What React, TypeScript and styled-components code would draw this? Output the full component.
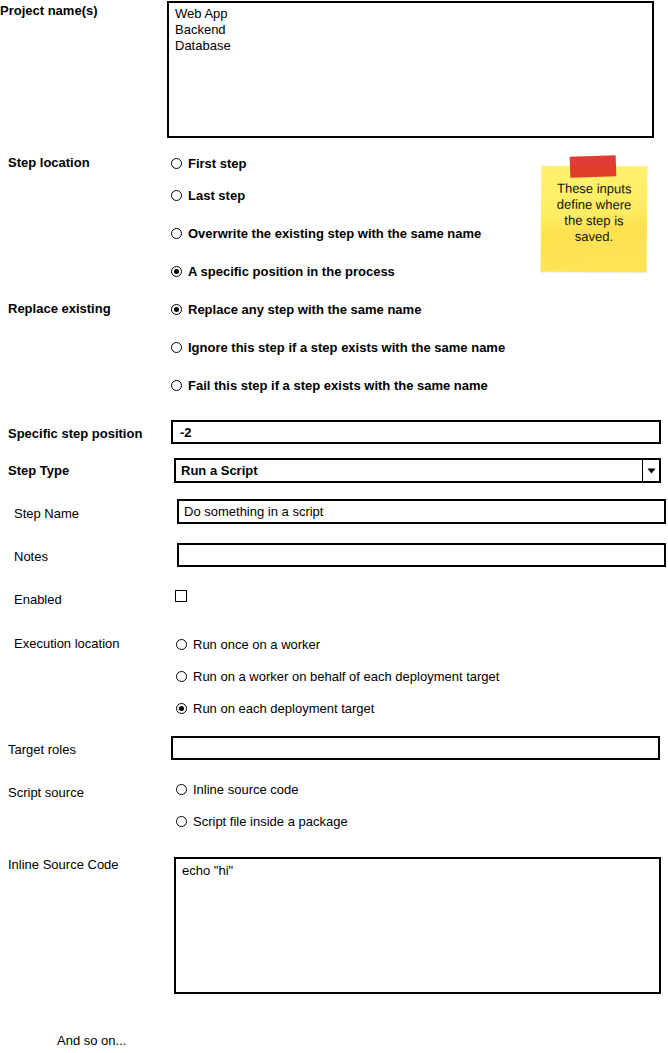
import React from "react";
import styled, { createGlobalStyle } from "styled-components";

const Global = createGlobalStyle`
  html, body { margin: 0; padding: 0; background: #fff; }
  body { font-family: "Liberation Sans", Arial, sans-serif; color: #000; font-size: 13px; }
`;

const Page = styled.div`
  position: relative;
  width: 668px;
  height: 1053px;
  overflow: hidden;
  background: #fff;
`;

const Row = styled.div<{ $mt: number }>`
  display: flex;
  align-items: flex-start;
  margin-top: ${(p) => p.$mt}px;
`;

const Label = styled.div<{ $indent: number; $pt: number; $bold?: boolean; $w: number }>`
  flex: 0 0 ${(p) => p.$w - p.$indent}px;
  padding-left: ${(p) => p.$indent}px;
  padding-top: ${(p) => p.$pt}px;
  font-size: 13px;
  line-height: 16px;
  font-weight: ${(p) => (p.$bold ? 700 : 400)};
  white-space: nowrap;
`;

const Field = styled.div<{ $right: number }>`
  flex: 1;
  margin-right: ${(p) => p.$right}px;
`;

const TextBox = styled.div<{ $h: number; $bold?: boolean; $pl?: number }>`
  box-sizing: border-box;
  height: ${(p) => p.$h}px;
  border: 2px solid #000;
  background: #fff;
  padding: 0 0 0 ${(p) => p.$pl ?? 7}px;
  display: flex;
  align-items: center;
  font-size: 13px;
  font-weight: ${(p) => (p.$bold ? 700 : 400)};
  white-space: nowrap;
`;

const TextArea = styled.div<{ $h: number; $pt: number; $pl: number }>`
  box-sizing: border-box;
  height: ${(p) => p.$h}px;
  border: 2px solid #000;
  background: #fff;
  padding: ${(p) => p.$pt}px 0 0 ${(p) => p.$pl}px;
  font-size: 13px;
  line-height: 16px;
`;

const SelectBox = styled.div`
  box-sizing: border-box;
  height: 25px;
  border: 2px solid #000;
  display: flex;
  align-items: stretch;
  font-size: 13px;
  font-weight: 700;
`;

const SelectText = styled.div`
  flex: 1;
  display: flex;
  align-items: center;
  padding-left: 5px;
`;

const SelectButton = styled.div`
  flex: 0 0 16px;
  border-left: 1.5px solid #000;
  display: flex;
  align-items: center;
  justify-content: center;
`;

const RadioList = styled.div`
  display: flex;
  flex-direction: column;
`;

const RadioItem = styled.div<{ $mt: number; $bold?: boolean }>`
  display: flex;
  align-items: center;
  gap: 6px;
  margin-top: ${(p) => p.$mt}px;
  height: 16px;
  font-size: 13px;
  font-weight: ${(p) => (p.$bold ? 700 : 400)};
  white-space: nowrap;
`;

const RadioCircle = styled.span<{ $on?: boolean }>`
  box-sizing: border-box;
  width: 11px;
  height: 11px;
  border-radius: 50%;
  border: 1.5px solid #000;
  display: inline-flex;
  align-items: center;
  justify-content: center;
  flex: 0 0 auto;
  &::after {
    content: "";
    width: 5px;
    height: 5px;
    border-radius: 50%;
    background: ${(p) => (p.$on ? "#000" : "transparent")};
  }
`;

const CheckBox = styled.div`
  box-sizing: border-box;
  width: 12px;
  height: 12px;
  border: 1.5px solid #000;
  margin-left: 4px;
`;

const Sticky = styled.div`
  position: absolute;
  left: 541px;
  top: 166px;
  width: 106px;
  height: 106px;
  box-sizing: border-box;
  padding-top: 15px;
  background: linear-gradient(175deg, #fff170 0%, #ffec63 45%, #ffe14f 60%, #ffe459 100%);
  box-shadow: 0 1px 1px rgba(0, 0, 0, 0.08);
  transform: rotate(0.4deg);
  text-align: center;
  font-size: 13px;
  line-height: 16px;
  color: #111;
`;

const Tape = styled.div`
  position: absolute;
  left: 570px;
  top: 156px;
  width: 46px;
  height: 21px;
  background: rgba(222, 40, 32, 0.9);
  transform: rotate(-2deg);
`;

const Footer = styled.div`
  margin-top: 39px;
  padding-left: 57px;
  font-size: 13px;
  line-height: 16px;
`;

type RadioDef = { text: string; on?: boolean; mt: number };

const Radios = ({ items, bold }: { items: RadioDef[]; bold?: boolean }) => (
  <RadioList>
    {items.map((r) => (
      <RadioItem key={r.text} $mt={r.mt} $bold={bold}>
        <RadioCircle $on={r.on} />
        {r.text}
      </RadioItem>
    ))}
  </RadioList>
);

export default function App() {
  return (
    <Page>
      <Global />
      <Row $mt={1}>
        <Label $w={167} $indent={0} $pt={2} $bold>
          Project name(s)
        </Label>
        <Field $right={14}>
          <TextArea $h={137} $pt={3} $pl={6}>
            Web App
            <br />
            Backend
            <br />
            Database
          </TextArea>
        </Field>
      </Row>

      <Row $mt={17}>
        <Label $w={171} $indent={8} $pt={0} $bold>
          Step location
        </Label>
        <Field $right={0}>
          <Radios
            bold
            items={[
              { text: "First step", mt: 0 },
              { text: "Last step", mt: 16 },
              { text: "Overwrite the existing step with the same name", mt: 22 },
              { text: "A specific position in the process", on: true, mt: 22 },
            ]}
          />
        </Field>
      </Row>

      <Row $mt={22}>
        <Label $w={171} $indent={8} $pt={0} $bold>
          Replace existing
        </Label>
        <Field $right={0}>
          <Radios
            bold
            items={[
              { text: "Replace any step with the same name", on: true, mt: 0 },
              { text: "Ignore this step if a step exists with the same name", mt: 22 },
              { text: "Fail this step if a step exists with the same name", mt: 22 },
            ]}
          />
        </Field>
      </Row>

      <Row $mt={27}>
        <Label $w={171} $indent={8} $pt={6} $bold>
          Specific step position
        </Label>
        <Field $right={7}>
          <TextBox $h={24} $bold $pl={7}>
            -2
          </TextBox>
        </Field>
      </Row>

      <Row $mt={14}>
        <Label $w={174} $indent={8} $pt={5} $bold>
          Step Type
        </Label>
        <Field $right={7}>
          <SelectBox>
            <SelectText>Run a Script</SelectText>
            <SelectButton>
              <svg width="9" height="6" viewBox="0 0 9 6">
                <path d="M0.5 0.5 L8.5 0.5 L4.5 5.5 Z" fill="#000" />
              </svg>
            </SelectButton>
          </SelectBox>
        </Field>
      </Row>

      <Row $mt={16}>
        <Label $w={177} $indent={14} $pt={7}>
          Step Name
        </Label>
        <Field $right={2}>
          <TextBox $h={25} $pl={5}>
            Do something in a script
          </TextBox>
        </Field>
      </Row>

      <Row $mt={19}>
        <Label $w={177} $indent={14} $pt={6}>
          Notes
        </Label>
        <Field $right={2}>
          <TextBox $h={24} />
        </Field>
      </Row>

      <Row $mt={23}>
        <Label $w={171} $indent={14} $pt={2}>
          Enabled
        </Label>
        <Field $right={0}>
          <CheckBox />
        </Field>
      </Row>

      <Row $mt={28}>
        <Label $w={176} $indent={14} $pt={0}>
          Execution location
        </Label>
        <Field $right={0}>
          <Radios
            items={[
              { text: "Run once on a worker", mt: 0 },
              { text: "Run on a worker on behalf of each deployment target", mt: 16 },
              { text: "Run on each deployment target", on: true, mt: 16 },
            ]}
          />
        </Field>
      </Row>

      <Row $mt={20}>
        <Label $w={171} $indent={8} $pt={6}>
          Target roles
        </Label>
        <Field $right={8}>
          <TextBox $h={24} />
        </Field>
      </Row>

      <Row $mt={21}>
        <Label $w={176} $indent={8} $pt={4}>
          Script source
        </Label>
        <Field $right={0}>
          <Radios
            items={[
              { text: "Inline source code", mt: 0 },
              { text: "Script file inside a package", mt: 16 },
            ]}
          />
        </Field>
      </Row>

      <Row $mt={28}>
        <Label $w={174} $indent={8} $pt={0}>
          Inline Source Code
        </Label>
        <Field $right={7}>
          <TextArea $h={137} $pt={4} $pl={6}>
            echo "hi"
          </TextArea>
        </Field>
      </Row>

      <Footer>And so on...</Footer>

      <Sticky>
        These inputs
        <br />
        define where
        <br />
        the step is
        <br />
        saved.
      </Sticky>
      <Tape />
    </Page>
  );
}
